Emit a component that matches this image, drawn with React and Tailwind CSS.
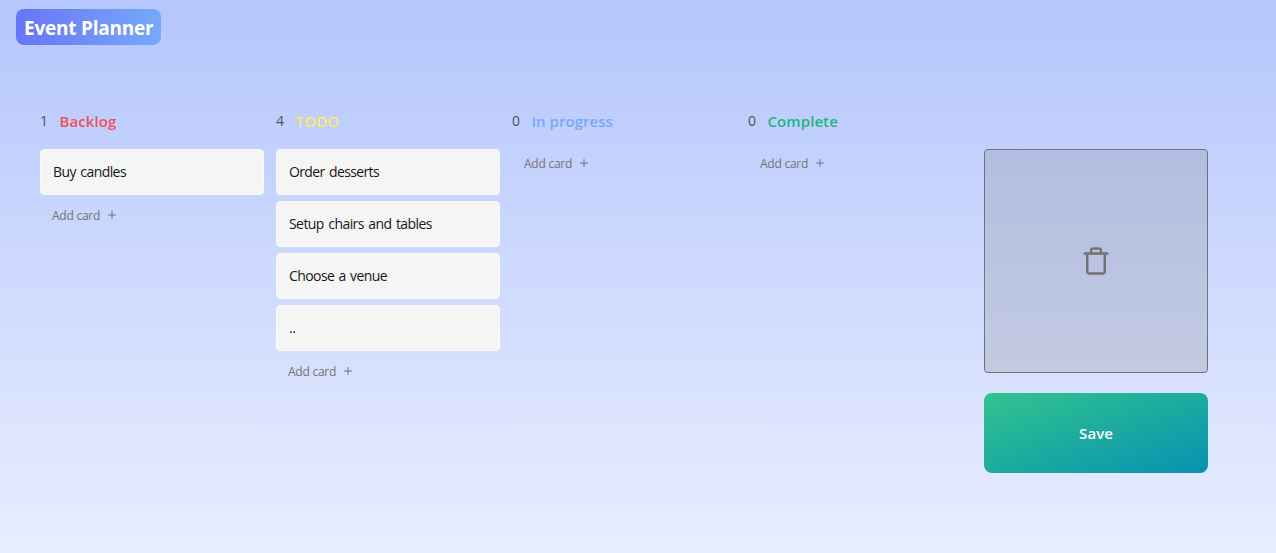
import { FiPlus, FiTrash } from "react-icons/fi";

const columns = [
  { title: "Backlog", color: "text-[#f05252]", spacing: "tracking-[0.08px]", cards: [{ text: "Buy candles", spacing: "tracking-[-0.57px]" }] },
  {
    title: "TODO",
    color: "text-[#fce96a]",
    spacing: "tracking-[0.2px]",
    cards: [
      { text: "Order desserts", spacing: "tracking-[-0.62px]" },
      { text: "Setup chairs and tables", spacing: "tracking-[-0.56px]" },
      { text: "Choose a venue", spacing: "tracking-[-0.59px]" },
      { text: "..", spacing: "tracking-[-0.5px]" },
    ],
  },
  { title: "In progress", color: "text-[#76a9fa]", spacing: "tracking-[0.03px]", cards: [] },
  { title: "Complete", color: "text-[#1fb57f]", spacing: "tracking-[0.08px]", cards: [] },
];

function Card({ text, spacing }) {
  return (
    <div className={`flex h-[46px] cursor-grab items-center rounded border border-[#fafafa] bg-neutral-100 px-3 text-sm [word-spacing:1.3px] whitespace-nowrap text-neutral-900 ${spacing}`}>
      {text}
    </div>
  );
}

function Column({ title, color, spacing, cards }) {
  return (
    <section className="w-56 shrink-0">
      <header className="mb-4 flex h-6 items-center">
        <span className="w-[19.5px] text-sm text-neutral-600">{cards.length}</span>
        <h3 className={`text-[15px] font-semibold whitespace-nowrap ${color} ${spacing}`}>{title}</h3>
      </header>
      <div className="flex flex-col gap-1.5">
        {cards.map((card) => (
          <Card key={card.text} {...card} />
        ))}
        <button className="flex h-7 items-center gap-1.5 px-3 text-xs tracking-[-0.25px] text-neutral-500">
          <span className="pt-0.5">Add card</span>
          <FiPlus />
        </button>
      </div>
    </section>
  );
}

export default function App() {
  return (
    <div className="h-screen overflow-hidden bg-[linear-gradient(to_bottom,#b4c6fc,#e8edff)] font-['Open_Sans',sans-serif]">
      <div className="flex h-[109px] items-start px-4 pt-[9px]">
        <h1 className="flex h-9 w-[145px] items-center rounded-lg bg-[linear-gradient(to_right,#6875f5,#76a9fa)] px-2 pt-0.5 text-[19px] font-bold tracking-[-0.22px] whitespace-nowrap text-white">
          Event Planner
        </h1>
      </div>
      <main className="flex gap-3 px-10">
        {columns.map((column) => (
          <Column key={column.title} {...column} />
        ))}
        <aside className="mt-10 flex w-56 shrink-0 flex-col gap-5">
          <div className="grid h-56 place-content-center rounded border border-neutral-500 bg-neutral-500/20 text-3xl text-neutral-500">
            <FiTrash />
          </div>
          <button className="h-20 rounded-lg bg-[linear-gradient(to_bottom_right,#31c48d,#0891b2)] text-[15px] font-semibold tracking-[0.05px] text-white">
            Save
          </button>
        </aside>
      </main>
    </div>
  );
}
